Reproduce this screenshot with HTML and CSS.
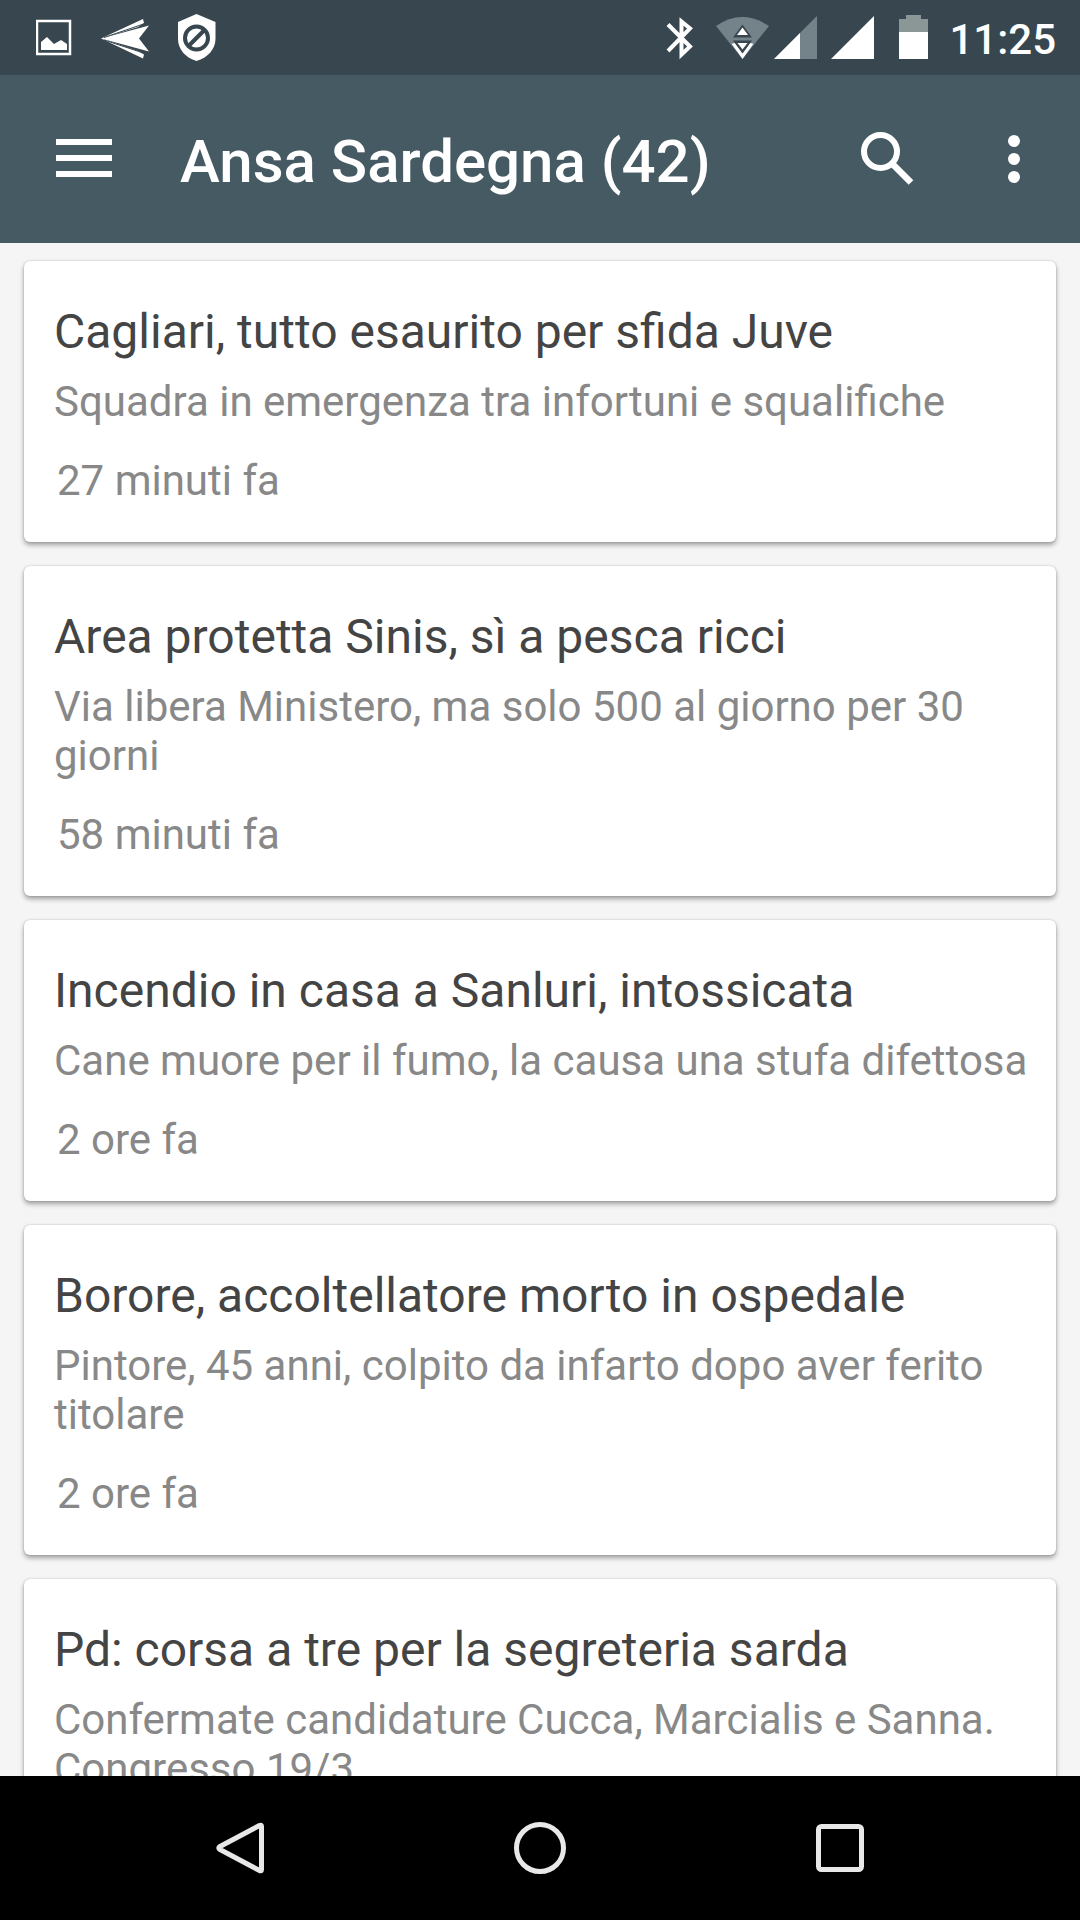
FILE: index.html
```html
<!DOCTYPE html>
<html lang="it">
<head>
  <meta charset="UTF-8">
  <title>Ansa Sardegna</title>
  <meta name="viewport" content="width=device-width, initial-scale=1">
  <link rel="stylesheet" href="styles.css">
</head>
<body>
<div class="status-bar">
  <div class="notifications">
    <svg width="36" height="48" viewBox="0 0 36 48">
      <rect x="1" y="7" width="33" height="33" fill="none" stroke="#fff" stroke-width="2.500"/>
      <path d="M5 36V28l6-5 7 7 7-4 6 4v6z" fill="#fff"/>
    </svg>
    <svg width="48" height="48" viewBox="0 0 48 48">
      <path d="M0 24.500L42 5l1 4-6 4zM0 24.500L48 11.500l-10 13 10 13zM0 24.500L37 37l6 3.500-1 4z" fill="#fff"/>
      <path d="M3 23.500L44 9.500M3 26L44 39.500" stroke="#38474f" stroke-width="1"/>
    </svg>
    <svg width="38" height="48" viewBox="0 0 38 48">
      <path d="M18.500 0l19 8v17c0 10-8 19-19 22C7.500 44 0 35 0 25V8z" fill="#fff"/>
      <circle cx="18.500" cy="24" r="11.500" fill="none" stroke="#38474f" stroke-width="4"/>
      <path d="M10.500 32L26.500 16" stroke="#38474f" stroke-width="4"/>
    </svg>
  </div>
  <div class="system-icons">
    <svg width="50" height="48" viewBox="0 0 50 48">
      <path d="M8 10.500L30 32.500 21.500 40.500V7.500L30 14.500 8 37" fill="none" stroke="#fff" stroke-width="4"/>
    </svg>
    <svg width="60" height="48" viewBox="0 0 60 48">
      <path d="M6 12Q32-6 59 12L32.500 45z" fill="#74828a"/>
      <path d="M21 29L32.500 45 44 29z" fill="#fff"/>
      <path d="M21 24h23v6l-4-1-7.500 10-7.500-10-4 1z" fill="#74828a"/>
      <path d="M23 23.500L32.500 10.500 42 23.500zM23 26.500h19L32.500 39.500z" fill="#38474f"/>
      <path d="M27 21l5.500-7.500L38 21zM27.500 29h10l-5 6.500z" fill="#fff"/>
    </svg>
    <svg width="57" height="48" viewBox="0 0 57 48">
      <path d="M4 45L47 2v43z" fill="#74828a"/>
      <path d="M4 45L30 19v26z" fill="#fff"/>
    </svg>
    <svg width="57" height="48" viewBox="0 0 57 48">
      <path d="M4 45L47 2v43z" fill="#fff"/>
    </svg>
    <svg width="65" height="48" viewBox="0 0 65 48">
      <path d="M15 19V5h7V1h15v4h7v14z" fill="#8b9697"/>
      <path d="M15 18h29v27H15z" fill="#fff"/>
    </svg>
    <span class="clock">11:25</span>
  </div>
</div>

<header class="app-bar">
  <button class="icon-btn" type="button" aria-label="Menu">
    <svg width="56" height="56" viewBox="0 0 56 56" fill="#fff">
      <path d="M0 8h56v6H0zM0 24h56v6H0zM0 40h56v6H0z"/>
    </svg>
  </button>
  <h1>Ansa Sardegna (42)</h1>
  <button class="icon-btn search-btn" type="button" aria-label="Cerca">
    <svg width="54" height="54" viewBox="0 0 54 54" fill="none" stroke="#fff">
      <circle cx="20.500" cy="19.500" r="16.500" stroke-width="6"/>
      <path d="M33 32.500L51 50.500" stroke-width="6.500"/>
      <path d="M31 30l5 5" stroke-width="3"/>
    </svg>
  </button>
  <button class="icon-btn more-btn" type="button" aria-label="Altre opzioni">
    <svg width="12" height="48" viewBox="0 0 12 48" fill="#fff">
      <circle cx="6" cy="6" r="6"/>
      <circle cx="6" cy="24" r="6"/>
      <circle cx="6" cy="42" r="6"/>
    </svg>
  </button>
</header>

<main class="news-list">
  <article class="card">
    <h2>Cagliari, tutto esaurito per sfida Juve</h2>
    <p>Squadra in emergenza tra infortuni e squalifiche</p>
    <time>27 minuti fa</time>
  </article>
  <article class="card">
    <h2>Area protetta Sinis, sì a pesca ricci</h2>
    <p>Via libera Ministero, ma solo 500 al giorno per 30 giorni</p>
    <time>58 minuti fa</time>
  </article>
  <article class="card">
    <h2>Incendio in casa a Sanluri, intossicata</h2>
    <p>Cane muore per il fumo, la causa una stufa difettosa</p>
    <time>2 ore fa</time>
  </article>
  <article class="card">
    <h2>Borore, accoltellatore morto in ospedale</h2>
    <p>Pintore, 45 anni, colpito da infarto dopo aver ferito titolare</p>
    <time>2 ore fa</time>
  </article>
  <article class="card">
    <h2>Pd: corsa a tre per la segreteria sarda</h2>
    <p>Confermate candidature Cucca, Marcialis e Sanna. Congresso 19/3</p>
  </article>
</main>

<nav class="nav-bar">
  <button type="button" aria-label="Indietro">
    <svg width="54" height="54" viewBox="0 0 54 54" fill="none" stroke="#e8e8e8" stroke-width="5" stroke-linejoin="round">
      <path d="M46.500 4.500q2-1 2 1v43q0 2-2 1L7 28.500q-2.500-1.500 0-3z"/>
    </svg>
  </button>
  <button type="button" aria-label="Home">
    <svg width="54" height="54" viewBox="0 0 54 54" fill="none" stroke="#e8e8e8" stroke-width="5">
      <circle cx="27" cy="27" r="23.500"/>
    </svg>
  </button>
  <button type="button" aria-label="App recenti">
    <svg width="54" height="54" viewBox="0 0 54 54" fill="none" stroke="#e8e8e8" stroke-width="5">
      <rect x="5.500" y="5.500" width="43" height="43" rx="3"/>
    </svg>
  </button>
</nav>
</body>
</html>
```

FILE: styles.css
```css
* { box-sizing: border-box; }
body {
  margin: 0;
  height: 100vh;
  display: flex;
  flex-direction: column;
  background: #f5f5f5;
  font-family: Roboto, sans-serif;
  overflow: hidden;
}
h1, h2, p { margin: 0; }
svg {
  display: block;
  flex-shrink: 0;
}
button {
  background: none;
  border: none;
  padding: 0;
  cursor: pointer;
}
.status-bar {
  height: 75px;
  flex-shrink: 0;
  display: flex;
  align-items: center;
  justify-content: space-between;
  padding: 0 24px 0 36px;
  background: #38474f;
}
.notifications {
  display: flex;
  gap: 29px;
}
.system-icons {
  display: flex;
  align-items: center;
}
.clock {
  padding-top: 4px;
  color: #fff;
  font-size: 42px;
  font-weight: 500;
  line-height: 48px;
}
.app-bar {
  height: 168px;
  flex-shrink: 0;
  display: flex;
  align-items: center;
  padding-left: 28px;
  background: #455a62;
}
.app-bar h1 {
  flex: 1;
  margin-left: 40px;
  padding-top: 5px;
  color: #fff;
  font-size: 60px;
  font-weight: 500;
  line-height: 72px;
  white-space: nowrap;
}
.icon-btn {
  width: 112px;
  height: 112px;
  display: flex;
  align-items: center;
  justify-content: center;
}
.search-btn {
  width: 122px;
}
.more-btn {
  width: 132px;
}
.news-list {
  flex: 1;
  min-height: 0;
  overflow: hidden;
  display: flex;
  flex-direction: column;
  gap: 24px;
  padding: 18px 24px 0;
}
.card {
  flex-shrink: 0;
  padding: 43px 24px 37px 30px;
  background: #fff;
  border-radius: 6px;
  box-shadow: 0 3px 5px rgba(0, 0, 0, 0.35), 0 0 2px rgba(0, 0, 0, 0.2);
}
.card h2 {
  color: #444;
  font-size: 48px;
  font-weight: 400;
  line-height: 56px;
}
.card p {
  margin-top: 17px;
  color: #888;
  font-size: 42px;
  line-height: 49px;
}
.card time {
  display: block;
  margin-top: 30px;
  padding-left: 3px;
  color: #888;
  font-size: 42px;
  line-height: 49px;
}
.nav-bar {
  height: 144px;
  flex-shrink: 0;
  display: flex;
  justify-content: center;
  background: #000;
}
.nav-bar button {
  width: 300px;
  display: flex;
  align-items: center;
  justify-content: center;
}
```
